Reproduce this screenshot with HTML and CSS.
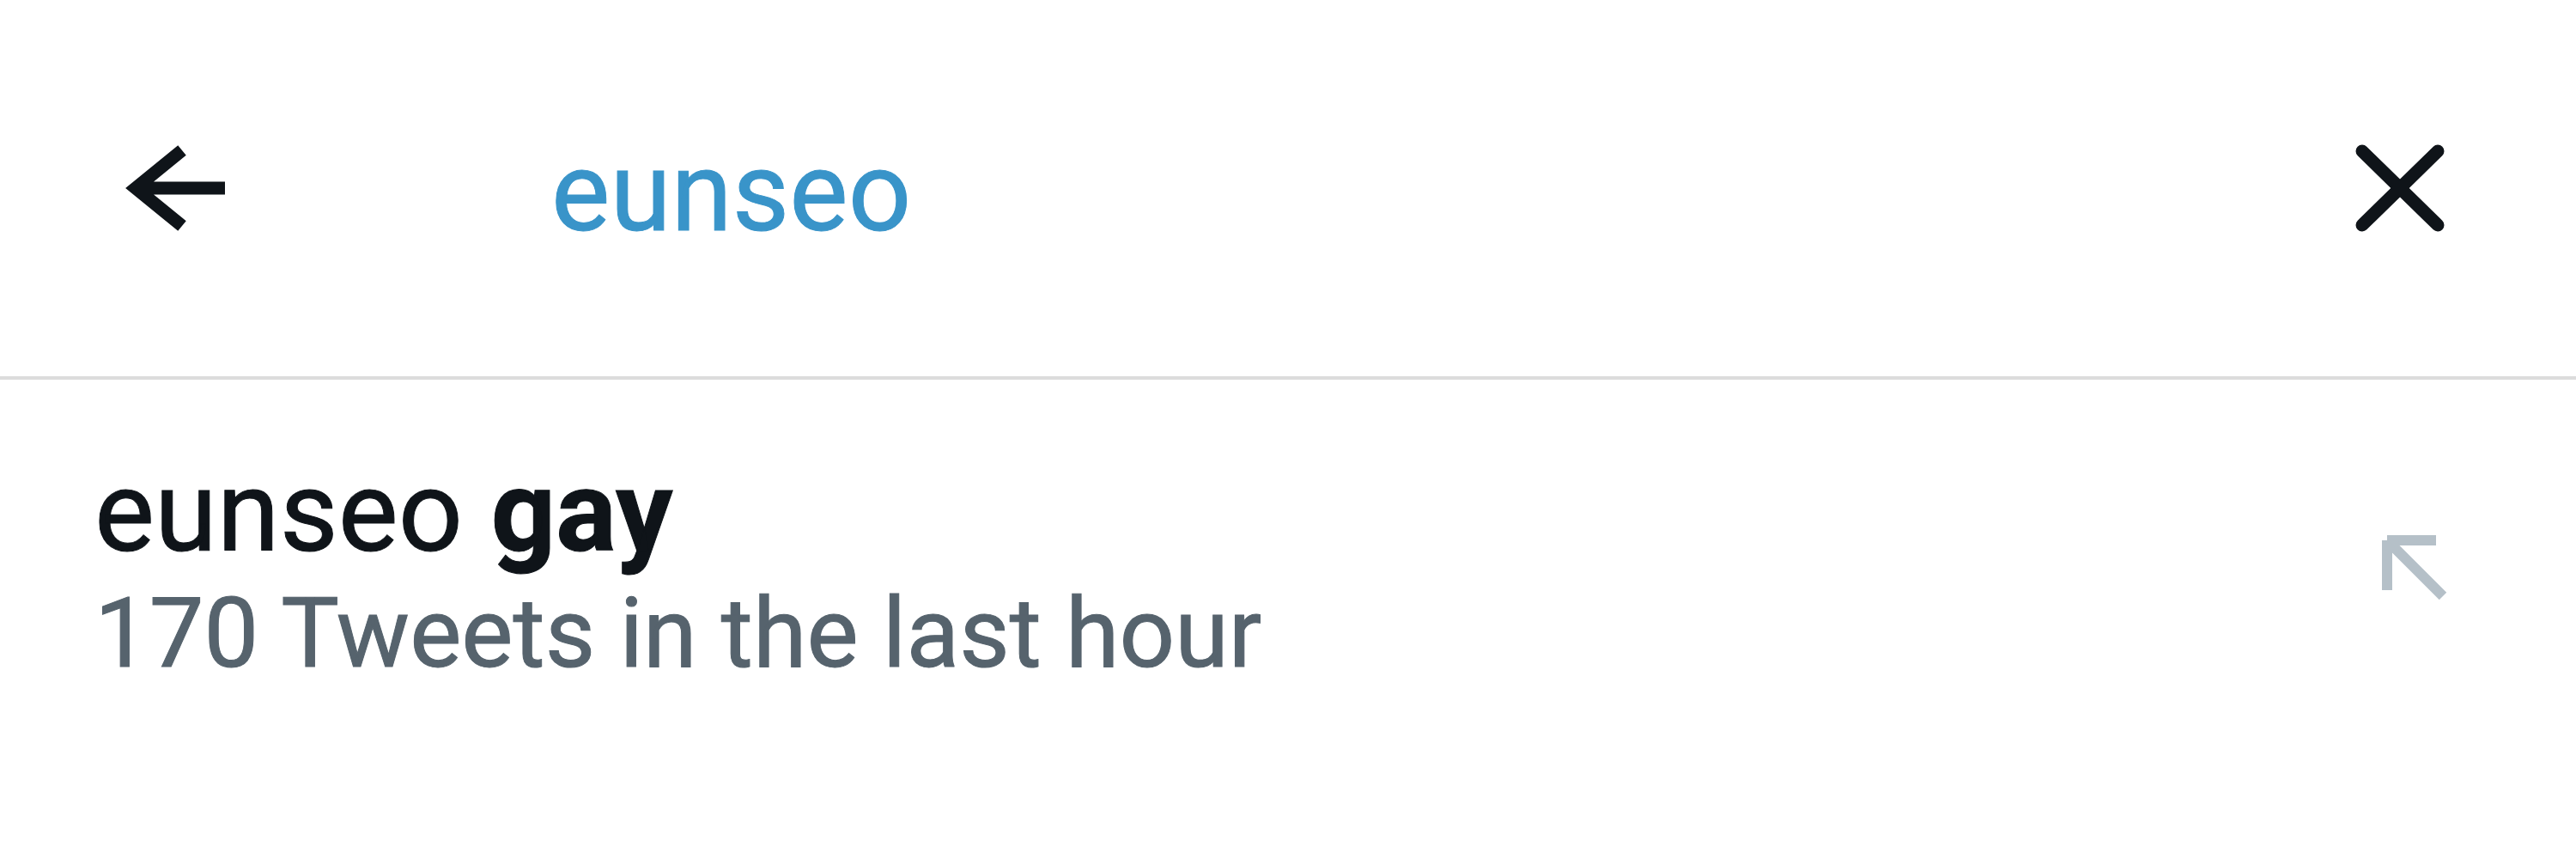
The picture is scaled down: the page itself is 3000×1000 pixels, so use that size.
FILE: index.html
```html
<!DOCTYPE html>
<html lang="en">
<head>
  <meta charset="UTF-8">
  <meta name="viewport" content="width=device-width, initial-scale=1.0">
  <title>Search</title>
  <link rel="stylesheet" href="styles.css">
</head>
<body>
  <div class="search-bar">
    <button class="icon-btn back-btn" aria-label="Back">
      <svg width="114" height="100" viewBox="0 0 114 100">
        <path d="M114 50 H14 M64 6 L10 50 L64 94" fill="none" stroke="#0f1419" stroke-width="15" stroke-linejoin="miter"/>
      </svg>
    </button>
    <div class="query">eunseo</div>
    <button class="icon-btn close-btn" aria-label="Clear">
      <svg width="104" height="102" viewBox="0 0 104 102">
        <path d="M8 8 L96 94 M96 8 L8 94" fill="none" stroke="#0f1419" stroke-width="15" stroke-linecap="round"/>
      </svg>
    </button>
  </div>

  <div class="suggestion">
    <div class="suggestion-text">
      <div class="suggestion-title">eunseo <b>gay</b></div>
      <div class="suggestion-meta">170 Tweets in the last hour</div>
    </div>
    <svg class="fill-icon" width="76" height="76" viewBox="0 0 76 76">
      <path d="M6 6 H63 M6 6 V64 M6 6 L71 71" fill="none" stroke="#b5c0c8" stroke-width="12"/>
    </svg>
  </div>
</body>
</html>
```

FILE: styles.css
```css
body {
  margin: 0;
  background: #ffffff;
  font-family: Roboto, 'Liberation Sans', sans-serif;
  color: #0f1419;
  -webkit-text-stroke: 1px currentColor;
}
.search-bar {
  display: flex;
  align-items: center;
  height: 438px;
  border-bottom: 4px solid #dcdcdc;
}
.icon-btn {
  display: flex;
  padding: 0;
  background: none;
  border: none;
  cursor: pointer;
}
.icon-btn svg {
  overflow: visible;
}
.back-btn {
  margin-left: 148px;
}
.query {
  flex: 1;
  margin-left: 380px;
  padding-top: 8px;
  font-size: 129px;
  line-height: 129px;
  color: #3994c9;
}
.close-btn {
  margin-right: 153px;
}
.suggestion {
  display: flex;
  align-items: center;
  padding: 84px 150px 0 110px;
}
.suggestion-text {
  flex: 1;
}
.suggestion-title {
  font-size: 132px;
  line-height: 140px;
}
.suggestion-title b {
  font-weight: 700;
}
.suggestion-meta {
  margin-top: 4px;
  font-size: 113.5px;
  line-height: 135px;
  color: #56636d;
}
.fill-icon {
  margin-bottom: 10px;
}
```
